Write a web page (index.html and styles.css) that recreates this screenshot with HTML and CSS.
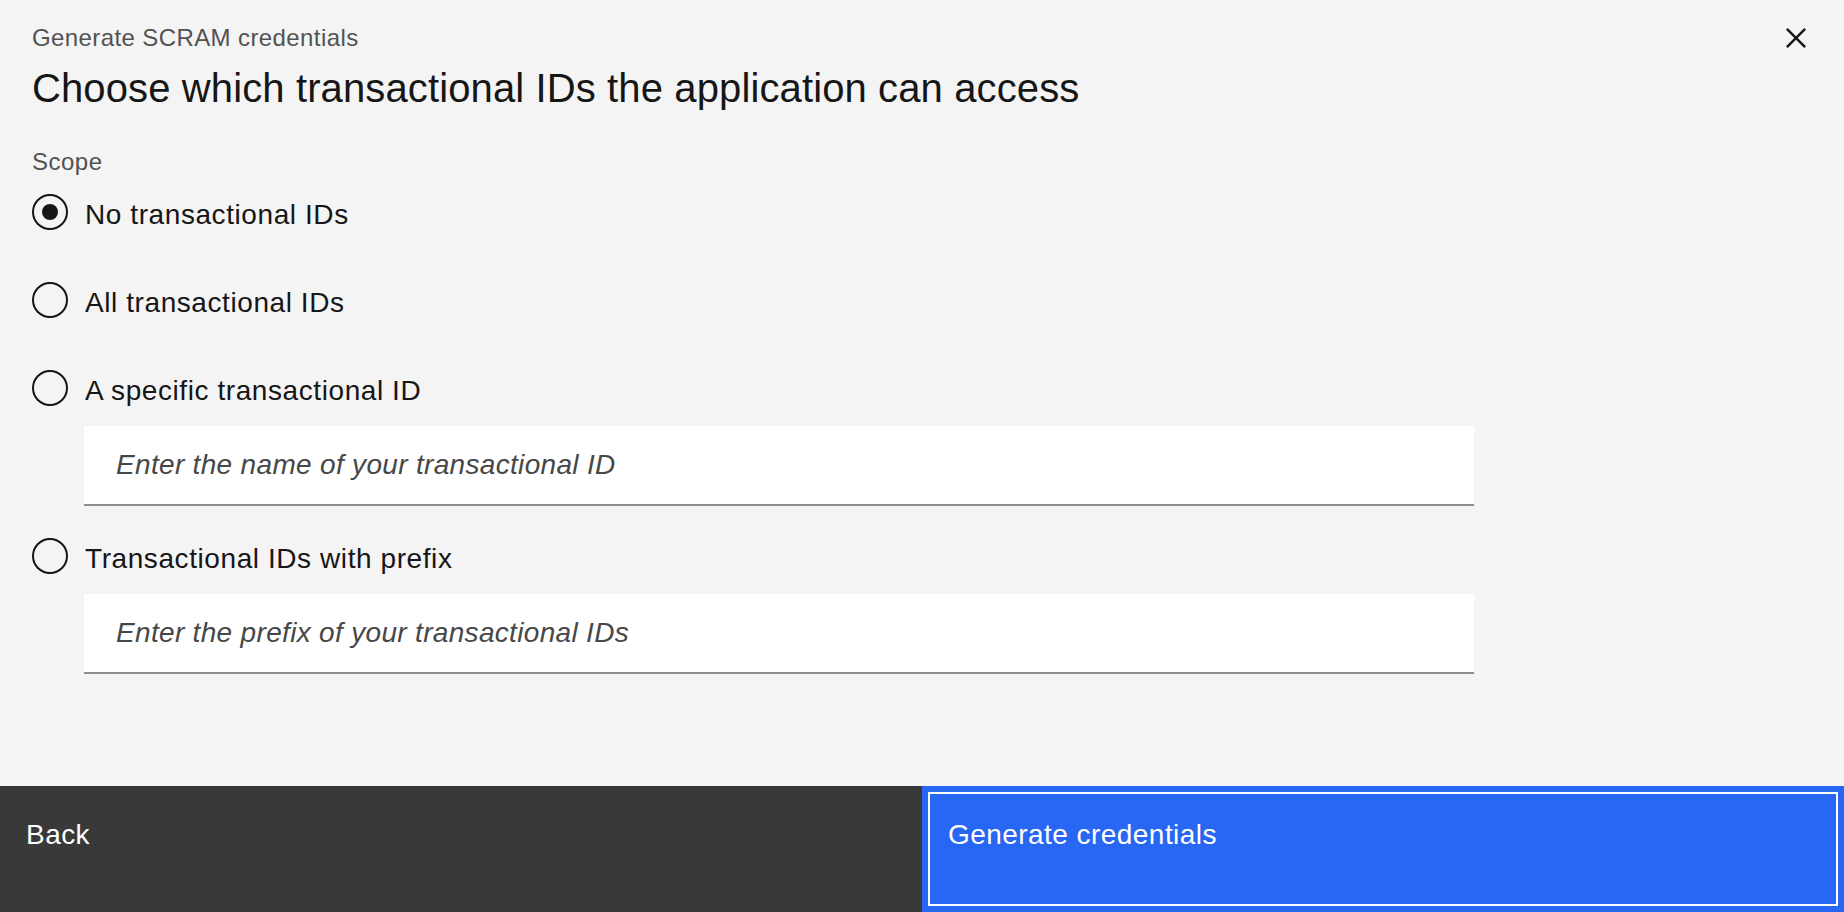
FILE: index.html
```html
<!DOCTYPE html>
<html lang="en">
<head>
<meta charset="utf-8">
<title>Generate SCRAM credentials</title>
<link rel="stylesheet" href="styles.css">
</head>
<body>
<div class="modal">
  <header class="modal-header">
    <div class="heading">
      <p class="heading-label">Generate SCRAM credentials</p>
      <h1 class="heading-title">Choose which transactional IDs the application can access</h1>
    </div>
    <button class="close-btn" type="button" aria-label="Close">
      <svg width="40" height="40" viewBox="0 0 32 32" aria-hidden="true"><path d="M24 9.4L22.6 8 16 14.6 9.4 8 8 9.4 14.6 16 8 22.6 9.4 24 16 17.4 22.6 24 24 22.6 17.4 16 24 9.4z" fill="#161616"/></svg>
    </button>
  </header>
  <main class="modal-body">
    <fieldset class="scope">
      <legend class="scope-label">Scope</legend>
      <label class="radio-row">
        <span class="radio radio-checked"></span>
        <span class="radio-text">No transactional IDs</span>
      </label>
      <label class="radio-row">
        <span class="radio"></span>
        <span class="radio-text">All transactional IDs</span>
      </label>
      <label class="radio-row radio-row-before-input">
        <span class="radio"></span>
        <span class="radio-text">A specific transactional ID</span>
      </label>
      <input class="text-input" type="text" placeholder="Enter the name of your transactional ID">
      <label class="radio-row radio-row-after-input">
        <span class="radio"></span>
        <span class="radio-text">Transactional IDs with prefix</span>
      </label>
      <input class="text-input" type="text" placeholder="Enter the prefix of your transactional IDs">
    </fieldset>
  </main>
  <footer class="modal-footer">
    <button class="btn btn-secondary" type="button">Back</button>
    <button class="btn btn-primary" type="button">Generate credentials</button>
  </footer>
</div>
</body>
</html>
```

FILE: styles.css
```css
* {
  box-sizing: border-box;
}

html, body {
  margin: 0;
  padding: 0;
  height: 100%;
}

body {
  background: #f4f4f4;
  font-family: "Liberation Sans", Arial, sans-serif;
  color: #161616;
}

.modal {
  height: 912px;
  display: flex;
  flex-direction: column;
  background: #f4f4f4;
}

.modal-header {
  display: flex;
  justify-content: space-between;
  align-items: flex-start;
  padding: 0 0 0 32px;
}

.heading {
  padding-top: 22px;
}

.heading-label {
  margin: 0;
  font-size: 24px;
  line-height: 32px;
  letter-spacing: 0.4px;
  color: #525252;
}

.heading-title {
  margin: 6px 0 0;
  font-size: 40px;
  line-height: 56px;
  font-weight: 400;
  letter-spacing: 0.12px;
  color: #161616;
}

.close-btn {
  width: 40px;
  height: 40px;
  margin: 18px 28px 0 0;
  padding: 0;
  border: 0;
  background: transparent;
  display: flex;
}

.modal-body {
  flex: 1;
  padding: 30px 0 0 32px;
}

.scope {
  margin: 0;
  padding: 0;
  border: 0;
  display: flex;
  flex-direction: column;
  align-items: flex-start;
}

.scope-label {
  padding: 0;
  margin: 0 0 16px;
  font-size: 24px;
  line-height: 32px;
  letter-spacing: 0.5px;
  color: #525252;
  float: left;
}

.radio-row {
  display: flex;
  align-items: center;
  height: 36px;
  margin-bottom: 52px;
}

.radio-row-before-input {
  margin-bottom: 20px;
}

.radio-row-after-input {
  margin-top: 32px;
  margin-bottom: 20px;
}

.radio {
  width: 36px;
  height: 36px;
  border: 2px solid #161616;
  border-radius: 50%;
  display: flex;
  align-items: center;
  justify-content: center;
  margin-right: 17px;
  flex: none;
}

.radio-checked::before {
  content: "";
  width: 16px;
  height: 16px;
  border-radius: 50%;
  background: #161616;
}

.radio-text {
  font-size: 28px;
  line-height: 36px;
  padding-top: 6px;
  letter-spacing: 0.58px;
  color: #161616;
}

.text-input {
  margin-left: 52px;
  width: 1390px;
  height: 80px;
  padding: 0 32px;
  border: 0;
  border-bottom: 2px solid #8d8d8d;
  background: #ffffff;
  font-family: inherit;
  font-size: 28px;
  letter-spacing: 0.32px;
  color: #161616;
  outline: none;
}

.text-input::placeholder {
  font-style: italic;
  color: #474747;
  opacity: 1;
}

.modal-footer {
  display: flex;
  height: 126px;
}

.btn {
  flex: 1;
  border: 0;
  margin: 0;
  text-align: left;
  font-family: inherit;
  font-size: 28px;
  line-height: 36px;
  letter-spacing: 0.45px;
  color: #ffffff;
  display: flex;
  align-items: flex-start;
  padding: 31px 0 0 26px;
}

.btn-secondary {
  background: #393939;
}

.btn-primary {
  background: #2866f4;
  outline: 2px solid #ffffff;
  outline-offset: -8px;
}
```
